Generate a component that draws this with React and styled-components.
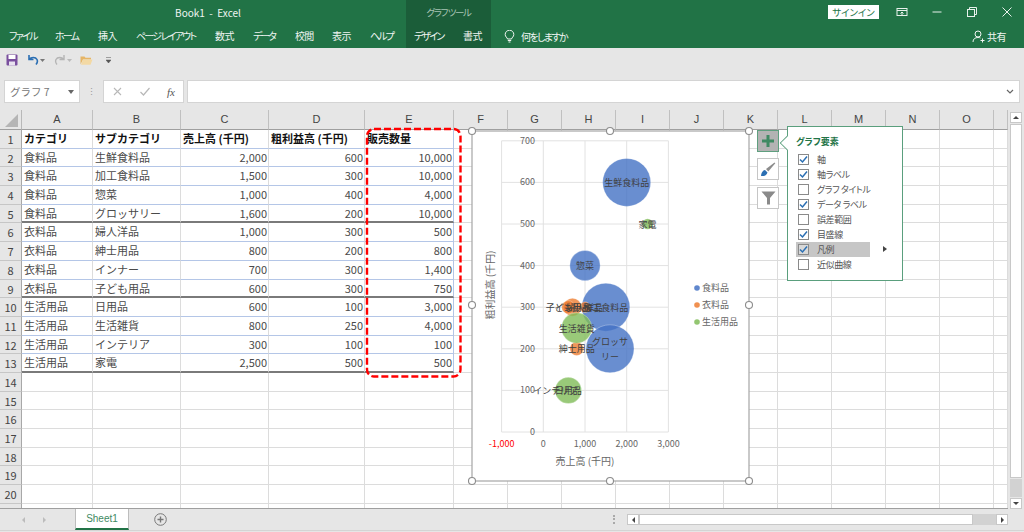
import React from "react";
import styled, { createGlobalStyle } from "styled-components";

const GlobalStyle = createGlobalStyle`
  html, body {
    margin: 0;
    padding: 0;
    background: #e6e6e6;
    overflow: hidden;
  }
  body {
    font-family: "Noto Sans CJK JP", "Liberation Sans", sans-serif;
  }
`;

const Page = styled.div`
  width: 1024px;
  height: 532px;
  display: flex;
  flex-direction: column;
  overflow: hidden;
  background: #e6e6e6;
`;

/* ---------- リボン ---------- */
const Header = styled.header`
  display: flex;
  height: 48px;
  background: #217346;
  color: #f0f5f2;
  font-size: 10px;
  font-feature-settings: "palt";
`;

const LeftPane = styled.div`
  width: 406px;
  display: flex;
  flex-direction: column;
`;

const ContextPane = styled.div`
  width: 85px;
  display: flex;
  flex-direction: column;
  background: #1b5d39;
`;

const RightPane = styled.div`
  flex: 1;
  display: flex;
  flex-direction: column;
`;

const TopRow = styled.div`
  height: 24px;
  display: flex;
  align-items: center;
  justify-content: ${(p) => p.$justify || "center"};
  padding-left: ${(p) => p.$left || 0}px;
`;

const TabRow = styled.nav`
  height: 24px;
  display: flex;
  align-items: center;
  padding-left: ${(p) => p.$left || 0}px;
`;

const Tab = styled.span`
  width: ${(p) => p.$w}px;
  margin-right: ${(p) => p.$gap || 20}px;
  flex: none;
  white-space: nowrap;
  line-height: 24px;
  letter-spacing: ${(p) => p.$track || 0}px;
`;

const ContextLabel = styled.span`
  color: #a9c4b5;
  font-size: 9.5px;
  letter-spacing: -1.4px;
`;

const SignIn = styled.button`
  width: 51px;
  height: 14px;
  margin-right: 17px;
  padding: 0;
  border: 0;
  background: #fff;
  color: #217346;
  font: inherit;
  font-size: 9.5px;
  line-height: 14px;
`;

const WindowIcon = styled.svg`
  width: 12px;
  height: 12px;
  margin-right: ${(p) => p.$gap || 23}px;
  fill: none;
  stroke: #e8f1ec;
  stroke-width: 1;
`;

const TellMe = styled.div`
  display: flex;
  align-items: center;
  gap: 6px;
  margin-left: 13px;
  letter-spacing: -1.6px;
`;

const Share = styled.div`
  margin-left: auto;
  margin-right: 18px;
  display: flex;
  align-items: center;
  gap: 2px;
  letter-spacing: -0.5px;
`;

const Qat = styled.div`
  height: 24px;
  display: flex;
  align-items: center;
  padding-left: 6px;
  background: #e6e6e6;
`;

const QatIcon = styled.svg`
  width: ${(p) => p.$w || 12}px;
  height: 12px;
  margin-right: ${(p) => p.$gap || 0}px;
  flex: none;
`;

/* ---------- 数式バー ---------- */
const FormulaBar = styled.div`
  height: 23px;
  margin-top: 8px;
  display: flex;
  align-items: stretch;
  padding: 0 4px;
`;

const NameBox = styled.div`
  width: 76px;
  box-sizing: border-box;
  display: flex;
  align-items: center;
  justify-content: space-between;
  padding: 0 5px;
  background: #fff;
  border: 1px solid #d4d4d4;
  color: #777;
  font-size: 10.5px;
`;

const Grip = styled.div`
  width: 23px;
  display: flex;
  align-items: center;
  justify-content: center;
  color: #999;
  font-size: 9px;
`;

const FxBox = styled.div`
  width: 81px;
  box-sizing: border-box;
  display: flex;
  align-items: center;
  justify-content: space-between;
  padding: 0 8px 0 8px;
  margin-right: 3px;
  background: #fff;
  border: 1px solid #d4d4d4;
`;

const FxText = styled.span`
  font-family: "Liberation Serif", serif;
  font-style: italic;
  font-size: 11px;
  color: #555;
`;

const FormulaInput = styled.div`
  flex: 1;
  display: flex;
  align-items: center;
  justify-content: flex-end;
  padding-right: 5px;
  background: #fff;
  border: 1px solid #d4d4d4;
`;

/* ---------- シート ---------- */
const SheetArea = styled.div`
  position: relative;
  height: 399px;
  margin-top: 7px;
  display: flex;
  overflow: hidden;
`;

const Grid = styled.div`
  width: 1008px;
  height: 399px;
  display: grid;
  grid-template-columns: 22px 71px 88px 88px 96px 89px repeat(10, 54px) 14px;
  grid-template-rows: 20px repeat(21, 18.7px);
  overflow: hidden;
  background: #fff;
  border-bottom: 1px solid #9f9f9f;
  box-sizing: border-box;
`;

const Corner = styled.div`
  background: #e6e6e6;
  border-bottom: 1px solid #9f9f9f;
  border-right: 1px solid #b8b8b8;
  position: relative;
  &::after {
    content: "";
    position: absolute;
    right: 3px;
    bottom: 2px;
    border-style: solid;
    border-width: 0 0 13px 13px;
    border-color: transparent transparent #b5b5b5 transparent;
  }
`;

const ColHead = styled.div`
  background: #e6e6e6;
  border-bottom: 1px solid #9f9f9f;
  border-right: 1px solid #c0c0c0;
  box-sizing: border-box;
  text-align: center;
  font-size: 11px;
  line-height: 19px;
  color: #444;
  font-family: "Liberation Sans", sans-serif;
`;

const RowHead = styled.div`
  background: #e6e6e6;
  border-bottom: 1px solid #c6c6c6;
  border-right: 1px solid #a8a8a8;
  box-sizing: border-box;
  text-align: center;
  font-size: 11px;
  line-height: 18px;
  color: #444;
`;

const Cell = styled.div`
  box-sizing: border-box;
  padding: 0 1px 0 2px;
  border-right: 1px solid ${(p) => p.$right || "#dcdcdc"};
  border-bottom: ${(p) => (p.$line === DARK ? 2 : 1)}px solid ${(p) => p.$line || "#dcdcdc"};
  font-size: 11px;
  line-height: 17px;
  font-weight: ${(p) => (p.$bold ? 700 : 400)};
  color: ${(p) => (p.$bold ? "#111" : "#4a4a4a")};
  text-align: ${(p) => (p.$num ? "right" : "left")};
  white-space: nowrap;
  overflow: hidden;
`;

const VScroll = styled.div`
  flex: 1;
  display: flex;
  flex-direction: column;
  align-items: center;
  padding: 2px 2px 0 2px;
  gap: 1px;
`;

const ScrollButton = styled.div`
  width: ${(p) => p.$w || 12}px;
  height: ${(p) => p.$h || 11}px;
  flex: none;
  box-sizing: border-box;
  background: #fff;
  border: 1px solid #c8c8c8;
  display: flex;
  align-items: center;
  justify-content: center;
`;

const Triangle = styled.span`
  width: 0;
  height: 0;
  border-style: solid;
  ${(p) =>
    ({
      up: "border-width: 0 3px 3px; border-color: transparent transparent #444;",
      down: "border-width: 3px 3px 0; border-color: #444 transparent transparent;",
      left: "border-width: 3px 3px 3px 0; border-color: transparent #444 transparent transparent;",
      right: "border-width: 3px 0 3px 3px; border-color: transparent transparent transparent #444;",
    }[p.$dir])}
`;

const VThumb = styled.div`
  flex: none;
  width: 12px;
  height: 354px;
  box-sizing: border-box;
  background: #fff;
  border: 1px solid #c8c8c8;
`;

const VTrack = styled.div`
  flex: 1;
  width: 12px;
  background: #d2d2d2;
`;

/* ---------- 赤枠 ---------- */
const DashedMark = styled.svg`
  position: absolute;
  left: 364px;
  top: 16px;
  width: 100px;
  height: 254px;
  pointer-events: none;
`;

/* ---------- グラフ ---------- */
const ChartFrame = styled.svg`
  position: absolute;
  left: 464px;
  top: 12px;
  width: 294px;
  height: 366px;
  font-family: "Noto Sans CJK JP", sans-serif;
`;

const SideButton = styled.div`
  position: absolute;
  left: 757px;
  top: ${(p) => p.$top}px;
  width: 22px;
  height: 22px;
  box-sizing: border-box;
  display: flex;
  align-items: center;
  justify-content: center;
  background: ${(p) => (p.$active ? "#b3b3b3" : "#fff")};
  border: 1px solid ${(p) => (p.$active ? "#5f9f7f" : "#c6c6c6")};
`;

const Popover = styled.div`
  position: absolute;
  left: 787px;
  top: 16px;
  width: 116px;
  height: 155px;
  box-sizing: border-box;
  padding: 8px 8px 0 8px;
  background: #fff;
  border: 1px solid #5a9f7d;
  font-size: 9px;
  font-feature-settings: "palt";
  color: #555;
  &::before {
    content: "";
    position: absolute;
    left: -7px;
    top: 10px;
    width: 11px;
    height: 11px;
    background: #fff;
    border-left: 1px solid #5a9f7d;
    border-bottom: 1px solid #5a9f7d;
    transform: rotate(45deg) scale(0.85);
  }
`;

const PopoverTitle = styled.div`
  font-weight: 700;
  color: #217346;
  line-height: 14px;
  margin-bottom: 3px;
`;

const CheckRow = styled.div`
  position: relative;
  height: 15px;
  width: 74px;
  padding-left: 2px;
  box-sizing: border-box;
  display: flex;
  align-items: center;
  gap: 8px;
  white-space: nowrap;
  letter-spacing: -0.4px;
  background: ${(p) => (p.$hover ? "#c6c6c6" : "transparent")};
`;

const CheckBox = styled.span`
  width: 11px;
  height: 11px;
  flex: none;
  box-sizing: border-box;
  background: ${(p) => (p.$hover ? "#d8d8d8" : "#fff")};
  border: 1px solid #8a8a8a;
  display: flex;
  align-items: center;
  justify-content: center;
`;

const SubArrow = styled.span`
  position: absolute;
  left: 87px;
  top: 4px;
  width: 0;
  height: 0;
  border-style: solid;
  border-width: 3px 0 3px 4px;
  border-color: transparent transparent transparent #444;
`;

/* ---------- シート見出し ---------- */
const TabBar = styled.div`
  height: 21px;
  display: flex;
  align-items: center;
  border-bottom: 1px solid #d4d4d4;
`;

const SheetNav = styled.div`
  width: 75px;
  display: flex;
  justify-content: center;
  gap: 18px;
  padding-right: 7px;
  box-sizing: border-box;
  opacity: 0.25;
`;

const SheetTab = styled.div`
  width: 54px;
  height: 21px;
  box-sizing: border-box;
  margin-top: -1px;
  background: #fff;
  border-left: 1px solid #bdbdbd;
  border-right: 1px solid #bdbdbd;
  border-bottom: 2px solid #217346;
  color: #3f8a63;
  font-family: "Liberation Sans", sans-serif;
  font-size: 10px;
  line-height: 20px;
  text-align: center;
`;

const AddSheet = styled.svg`
  width: 13px;
  height: 13px;
  margin-left: 25px;
`;

const BarGrip = styled.div`
  margin-left: 446px;
  width: 2px;
  height: 9px;
  border-left: 2px dotted #aaa;
`;

const HScroll = styled.div`
  margin-left: 10px;
  width: 381px;
  height: 11px;
  display: flex;
  align-items: center;
`;

const HThumb = styled.div`
  width: 334px;
  height: 11px;
  box-sizing: border-box;
  background: #fff;
  border: 1px solid #c8c8c8;
`;

const HTrack = styled.div`
  flex: 1;
  height: 11px;
  background: #d2d2d2;
`;

const columns = ["A", "B", "C", "D", "E", "F", "G", "H", "I", "J", "K", "L", "M", "N", "O", ""];

const rows = [
  ["食料品", "生鮮食料品", 2000, 600, 10000],
  ["食料品", "加工食料品", 1500, 300, 10000],
  ["食料品", "惣菜", 1000, 400, 4000],
  ["食料品", "グロッサリー", 1600, 200, 10000],
  ["衣料品", "婦人洋品", 1000, 300, 500],
  ["衣料品", "紳士用品", 800, 200, 800],
  ["衣料品", "インナー", 700, 300, 1400],
  ["衣料品", "子ども用品", 600, 300, 750],
  ["生活用品", "日用品", 600, 100, 3000],
  ["生活用品", "生活雑貨", 800, 250, 4000],
  ["生活用品", "インテリア", 300, 100, 100],
  ["生活用品", "家電", 2500, 500, 500],
];

const headings = ["カテゴリ", "サブカテゴリ", "売上高 (千円)", "粗利益高 (千円)", "販売数量"];

const ribbonTabs = [
  { label: "ファイル", w: 26, track: -1.7 },
  { label: "ホーム", w: 23, track: -1.8 },
  { label: "挿入", w: 18, track: -0.6 },
  { label: "ページ レイアウト", w: 59, track: -1.8 },
  { label: "数式", w: 18, track: -0.6 },
  { label: "データ", w: 22, track: -2 },
  { label: "校閲", w: 17, track: -0.8 },
  { label: "表示", w: 18, track: -0.6 },
  { label: "ヘルプ", w: 22, track: -2 },
];

const BLUE = "#b4c6e7";
const DARK = "#7a7a7a";

const lineFor = (rowNo) => {
  if (rowNo === 5 || rowNo === 9 || rowNo === 13) return DARK;
  return BLUE;
};

const chartElements = [
  { label: "軸", checked: true },
  { label: "軸ラベル", checked: true },
  { label: "グラフ タイトル", checked: false },
  { label: "データ ラベル", checked: true },
  { label: "誤差範囲", checked: false },
  { label: "目盛線", checked: true },
  { label: "凡例", checked: true, hover: true },
  { label: "近似曲線", checked: false },
];

// グラフ内の座標（SVG の原点はページの 464,122）
const X0 = 543.3 - 464;
const Y0 = 432 - 122;
const px = (v) => X0 + (v / 1000) * 41.7;
const py = (v) => Y0 - (v / 100) * 41.6;

const COLORS = { food: "#4472c4", cloth: "#ed7d31", life: "#80bc58" };

const bubbles = [
  { k: "food", x: 2000, y: 600, n: 10000, t: ["生鮮食料品"] },
  { k: "food", x: 1500, y: 300, n: 10000, t: ["加工食料品"] },
  { k: "food", x: 1000, y: 400, n: 4000, t: ["惣菜"] },
  { k: "food", x: 1600, y: 200, n: 10000, t: ["グロッサ", "リー"] },
  { k: "cloth", x: 1000, y: 300, n: 500, t: ["婦人洋品"] },
  { k: "cloth", x: 800, y: 200, n: 800, t: ["紳士用品"] },
  { k: "cloth", x: 700, y: 300, n: 1400, t: ["インナー"] },
  { k: "cloth", x: 600, y: 300, n: 750, t: ["子ども用品"] },
  { k: "life", x: 600, y: 100, n: 3000, t: ["日用品"] },
  { k: "life", x: 800, y: 250, n: 4000, t: ["生活雑貨"] },
  { k: "life", x: 300, y: 100, n: 100, t: ["インテリア"] },
  { k: "life", x: 2500, y: 500, n: 500, t: ["家電"] },
];

const radius = (n) => 24 * Math.sqrt(n / 10000);

function Chart() {
  const left = 8;
  const right = 285;
  const top = 9;
  const bottom = 359;
  const midX = 146;
  const midY = 183;
  const handles = [
    [left, top], [midX, top], [right, top],
    [left, midY], [right, midY],
    [left, bottom], [midX, bottom], [right, bottom],
  ];
  return (
    <ChartFrame viewBox="0 0 294 366">
      <rect x={left} y={top} width={right - left} height={bottom - top} fill="#fff" stroke="#a6a6a6" strokeWidth="1.2" />
      {[0, 100, 200, 300, 400, 500, 600, 700].map((v) => (
        <g key={v}>
          <line x1={px(-1000)} x2={px(3000)} y1={py(v)} y2={py(v)} stroke="#e2e2e2" strokeWidth="1" />
          <text x={71} y={py(v) + 3} textAnchor="end" fontSize="9" fill="#666">{v}</text>
        </g>
      ))}
      {[-1000, 0, 1000, 2000, 3000].map((v) => (
        <g key={v}>
          <line x1={px(v)} x2={px(v)} y1={py(700)} y2={py(0)} stroke="#e2e2e2" strokeWidth="1" />
          <text x={px(v)} y={325} textAnchor="middle" fontSize="9" fill={v < 0 ? "#f00" : "#666"}>
            {v.toLocaleString("en-US")}
          </text>
        </g>
      ))}
      {bubbles.map((b, i) => (
        <circle key={i} cx={px(b.x)} cy={py(b.y)} r={radius(b.n)} fill={COLORS[b.k]} fillOpacity="0.8" stroke="#fff" strokeOpacity="0.4" strokeWidth="0.7" />
      ))}
      {bubbles.map((b, i) =>
        b.t.map((line, j) => (
          <text
            key={`${i}-${j}`}
            x={px(b.x)}
            y={py(b.y) + 3.5 + (j - (b.t.length - 1) / 2) * 15}
            textAnchor="middle"
            fontSize="9"
            fill="#404040"
          >
            {line}
          </text>
        ))
      )}
      <text x={121} y={343} textAnchor="middle" fontSize="10" fill="#666">売上高 (千円)</text>
      <text transform="translate(30 163) rotate(-90)" textAnchor="middle" fontSize="10" fill="#666">粗利益高 (千円)</text>
      {[["food", "食料品", 166], ["cloth", "衣料品", 183], ["life", "生活用品", 200]].map(([k, t, y]) => (
        <g key={k}>
          <circle cx={233} cy={y} r={2.8} fill={COLORS[k]} fillOpacity="0.85" />
          <text x={238} y={y + 3} fontSize="9" fill="#666">{t}</text>
        </g>
      ))}
      {handles.map(([x, y], i) => (
        <circle key={i} cx={x} cy={y} r={3.5} fill="#fff" stroke="#8c8c8c" strokeWidth="1.1" />
      ))}
    </ChartFrame>
  );
}

export default function App() {
  return (
    <Page>
      <GlobalStyle />
      <Header>
        <LeftPane>
          <TopRow $left={10}>Book1&nbsp; -&nbsp; Excel</TopRow>
          <TabRow $left={9}>
            {ribbonTabs.map((t) => (
              <Tab key={t.label} $w={t.w} $track={t.track}>{t.label}</Tab>
            ))}
          </TabRow>
        </LeftPane>
        <ContextPane>
          <TopRow><ContextLabel>グラフ ツール</ContextLabel></TopRow>
          <TabRow $left={8}>
            <Tab $w={30} $gap={19} $track={-1.8}>デザイン</Tab>
            <Tab $w={18} $track={-0.6}>書式</Tab>
          </TabRow>
        </ContextPane>
        <RightPane>
          <TopRow $justify="flex-end">
            <SignIn>サインイン</SignIn>
            <WindowIcon viewBox="0 0 12 12">
              <rect x="1" y="2.5" width="10" height="7" />
              <path d="M1 4.5h10M6 9V6M4.5 7.5 6 6l1.5 1.5" />
            </WindowIcon>
            <WindowIcon viewBox="0 0 12 12">
              <path d="M1.5 6h9" />
            </WindowIcon>
            <WindowIcon viewBox="0 0 12 12">
              <rect x="1.5" y="3.5" width="7" height="7" />
              <path d="M3.5 3.5v-2h7v7h-2" />
            </WindowIcon>
            <WindowIcon viewBox="0 0 12 12" $gap={11}>
              <path d="m1.5 1.5 9 9M10.5 1.5l-9 9" />
            </WindowIcon>
          </TopRow>
          <TabRow>
            <TellMe>
              <svg width="11" height="13" viewBox="0 0 11 13" fill="none" stroke="#f0f5f2" strokeWidth="1">
                <path d="M3.5 9C3.3 7.6 1.2 6.8 1.2 4.5a4.3 4.3 0 0 1 8.6 0C9.8 6.8 7.7 7.6 7.5 9zM3.8 10.5h3.4M4.5 12h2" />
              </svg>
              何をしますか
            </TellMe>
            <Share>
              <svg width="13" height="13" viewBox="0 0 13 13" fill="none" stroke="#f0f5f2" strokeWidth="1">
                <circle cx="6" cy="4" r="3" />
                <path d="M1 12c0-3 2-4.5 5-4.5 1 0 1.8.2 2.5.5M10.5 8.5v4M8.5 10.5h4" />
              </svg>
              共有
            </Share>
          </TabRow>
        </RightPane>
      </Header>

      <Qat>
        <QatIcon viewBox="0 0 12 12" $gap={9}>
          <rect x="0.5" y="0.5" width="11" height="11" rx="1" fill="#7a4f9e" />
          <rect x="2.5" y="1" width="7" height="4" fill="#fff" />
          <rect x="3" y="7.5" width="6" height="4" fill="#e8e2ef" />
        </QatIcon>
        <QatIcon viewBox="0 0 12 12" $gap={1}>
          <path d="M2 1v4.5h4.5M2.3 5.3C4 3 8.5 2.6 10 5.5c.8 1.7.3 3.5-1 5" fill="none" stroke="#2b6fb3" strokeWidth="1.6" />
        </QatIcon>
        <QatIcon viewBox="0 0 5 12" $w={5} $gap={9}>
          <path d="M0 5h5L2.5 8z" fill="#777" />
        </QatIcon>
        <QatIcon viewBox="0 0 12 12" $gap={1}>
          <path d="M10 1v4.5H5.5M9.7 5.3C8 3 3.5 2.6 2 5.5c-.8 1.7-.3 3.5 1 5" fill="none" stroke="#b5b5b5" strokeWidth="1.4" />
        </QatIcon>
        <QatIcon viewBox="0 0 5 12" $w={5} $gap={8}>
          <path d="M0 5h5L2.5 8z" fill="#bbb" />
        </QatIcon>
        <QatIcon viewBox="0 0 13 12" $w={13} $gap={13}>
          <path d="M0.5 2.5h4l1 1.2h5.5v1.8H3L0.5 10.5z" fill="#e6b566" />
          <path d="M3 5.5h9.5L10.5 10.8H1z" fill="#f3d9a4" />
        </QatIcon>
        <QatIcon viewBox="0 0 5 12" $w={5}>
          <path d="M0 3.5h5M0 6h5L2.5 9z" fill="#555" stroke="#555" strokeWidth="0.5" />
        </QatIcon>
      </Qat>

      <FormulaBar>
        <NameBox>
          グラフ 7
          <svg width="6" height="4" viewBox="0 0 6 4"><path d="M0 0h6L3 4z" fill="#666" /></svg>
        </NameBox>
        <Grip>⋮</Grip>
        <FxBox>
          <svg width="11" height="11" viewBox="0 0 11 11" stroke="#b8b8b8" strokeWidth="1.1" fill="none">
            <path d="m2 2 7 7M9 2 2 9" />
          </svg>
          <svg width="12" height="11" viewBox="0 0 12 11" stroke="#b8b8b8" strokeWidth="1.2" fill="none">
            <path d="m1.5 6 3 3L10.5 2" />
          </svg>
          <FxText>fx</FxText>
        </FxBox>
        <FormulaInput>
          <svg width="8" height="5" viewBox="0 0 8 5" stroke="#666" strokeWidth="1.2" fill="none">
            <path d="m1 1 3 3 3-3" />
          </svg>
        </FormulaInput>
      </FormulaBar>

      <SheetArea>
        <Grid>
          <Corner />
          {columns.map((c, i) => (
            <ColHead key={i}>{c}</ColHead>
          ))}

          <RowHead>1</RowHead>
          {headings.map((h, i) => (
            <Cell key={h} $bold $line={BLUE} $right={i === 4 ? BLUE : undefined}>{h}</Cell>
          ))}
          {columns.slice(5).map((c, i) => (
            <Cell key={i} />
          ))}

          {rows.map((r, i) => {
            const rowNo = i + 2;
            const line = lineFor(rowNo);
            return (
              <React.Fragment key={rowNo}>
                <RowHead>{rowNo}</RowHead>
                <Cell $line={line}>{r[0]}</Cell>
                <Cell $line={line}>{r[1]}</Cell>
                <Cell $line={line} $num>{r[2].toLocaleString("en-US")}</Cell>
                <Cell $line={line} $num>{r[3].toLocaleString("en-US")}</Cell>
                <Cell $line={line} $num $right={BLUE}>{r[4].toLocaleString("en-US")}</Cell>
                {columns.slice(5).map((c, j) => (
                  <Cell key={j} />
                ))}
              </React.Fragment>
            );
          })}

          {[14, 15, 16, 17, 18, 19, 20, 21].map((rowNo) => (
            <React.Fragment key={rowNo}>
              <RowHead>{rowNo < 21 ? rowNo : ""}</RowHead>
              {columns.map((c, j) => (
                <Cell key={j} />
              ))}
            </React.Fragment>
          ))}
        </Grid>

        <VScroll>
          <ScrollButton><Triangle $dir="up" /></ScrollButton>
          <VThumb />
          <VTrack />
          <ScrollButton><Triangle $dir="down" /></ScrollButton>
        </VScroll>

        <DashedMark viewBox="0 0 100 254">
          <rect x="3" y="3" width="93.5" height="247.5" rx="7" fill="none" stroke="#f00" strokeWidth="2.4" strokeDasharray="7 3" />
        </DashedMark>

        <Chart />

        <SideButton $top={20} $active>
          <svg width="12" height="12" viewBox="0 0 12 12"><path d="M4.5 0h3v4.5H12v3H7.5V12h-3V7.5H0v-3h4.5z" fill="#3f8a63" /></svg>
        </SideButton>
        <SideButton $top={48}>
          <svg width="16" height="15" viewBox="0 0 16 15">
            <path d="M1 14c.3-3 1.5-5.5 4-6l2.5 2.4C7 13 4 14.5 1 14z" fill="#2b6fb3" />
            <path d="m6 7 8.5-6.5.8.8L8.3 9.6z" fill="#8c8c8c" />
          </svg>
        </SideButton>
        <SideButton $top={77}>
          <svg width="15" height="14" viewBox="0 0 15 14"><path d="M0.5 0.5h14L9 7v6.5H6V7z" fill="#8a8a8a" /></svg>
        </SideButton>

        <Popover>
          <PopoverTitle>グラフ要素</PopoverTitle>
          {chartElements.map((el) => (
            <CheckRow key={el.label} $hover={el.hover}>
              <CheckBox $hover={el.hover}>
                {el.checked && (
                  <svg width="9" height="9" viewBox="0 0 9 9" fill="none" stroke="#2b6fb3" strokeWidth="1.5">
                    <path d="m1 4.5 2.5 2.5L8 1.5" />
                  </svg>
                )}
              </CheckBox>
              {el.label}
              {el.hover && <SubArrow />}
            </CheckRow>
          ))}
        </Popover>
      </SheetArea>

      <TabBar>
        <SheetNav>
          <Triangle $dir="left" />
          <Triangle $dir="right" />
        </SheetNav>
        <SheetTab>Sheet1</SheetTab>
        <AddSheet viewBox="0 0 13 13" fill="none" stroke="#777" strokeWidth="1">
          <circle cx="6.5" cy="6.5" r="5.8" />
          <path d="M6.5 3.5v6M3.5 6.5h6" strokeWidth="1.4" />
        </AddSheet>
        <BarGrip />
        <HScroll>
          <ScrollButton><Triangle $dir="left" /></ScrollButton>
          <HThumb />
          <HTrack />
          <ScrollButton><Triangle $dir="right" /></ScrollButton>
        </HScroll>
      </TabBar>
    </Page>
  );
}
